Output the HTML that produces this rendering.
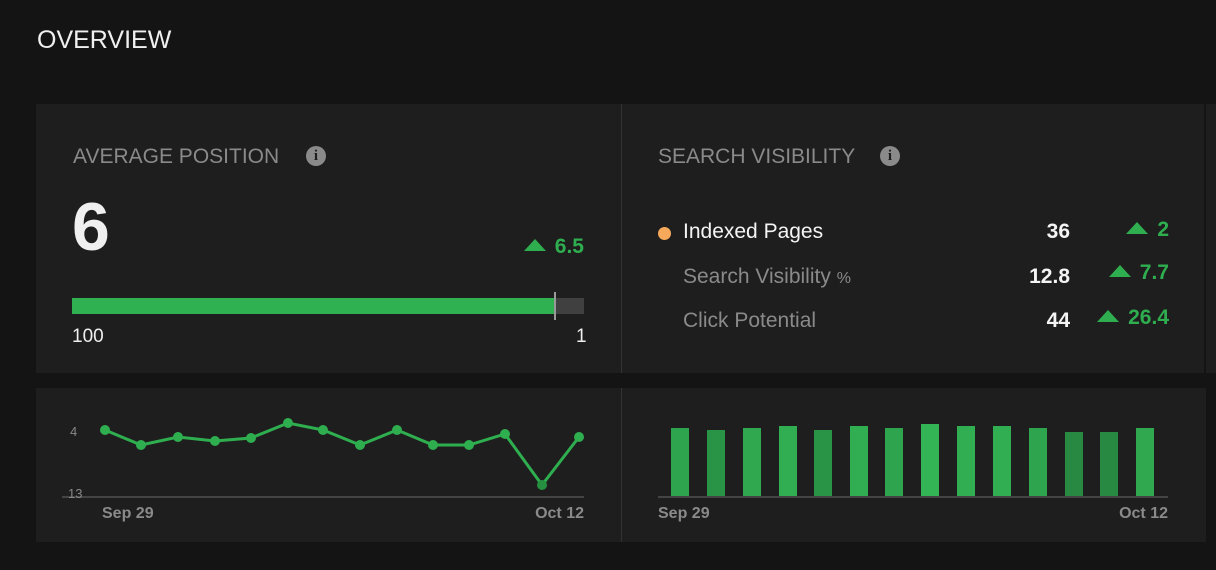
<!DOCTYPE html>
<html><head><style>
body{margin:0;width:1216px;height:570px;background:#141414;font-family:"Liberation Sans",sans-serif;position:relative;overflow:hidden}
.a{position:absolute}
.h{color:#8a8a8a;font-size:21px}
.g{color:#2fae50;font-weight:bold}
.t{display:inline-block;width:0;height:0;border-left:11px solid transparent;border-right:11px solid transparent;border-bottom:12px solid #2fae50;margin-right:9px;vertical-align:2px}
.info{width:20px;height:20px;border-radius:50%;background:#8a8a8a;color:#1e1e1e;font:bold 15px "Liberation Serif",serif;text-align:center;line-height:20px}
</style></head><body>
<div class="a" style="left:37px;top:26px;color:#f0f0f0;font-size:25px">OVERVIEW</div>
<div class="a" style="left:36px;top:104px;width:1180px;height:269px;background:#1e1e1e"></div>
<div class="a" style="left:621px;top:104px;width:1px;height:269px;background:#333"></div>
<div class="a" style="left:1204px;top:104px;width:2px;height:269px;background:#141414"></div>
<div class="a h" style="left:73px;top:145px">AVERAGE POSITION</div>
<div class="a info" style="left:306px;top:146px">i</div>
<div class="a" style="left:72px;top:188px;color:#f0f0f0;font-size:68px;font-weight:bold">6</div>
<div class="a g" style="left:464px;top:235px;width:120px;text-align:right;font-size:21px"><span class="t"></span>6.5</div>
<div class="a" style="left:72px;top:298px;width:512px;height:16px;background:#404040"></div>
<div class="a" style="left:72px;top:298px;width:483px;height:16px;background:#2fb152"></div>
<div class="a" style="left:554px;top:292px;width:2px;height:28px;background:#999"></div>
<div class="a" style="left:72px;top:326px;color:#eee;font-size:19px">100</div>
<div class="a" style="left:576px;top:326px;color:#eee;font-size:19px">1</div>
<div class="a h" style="left:658px;top:145px">SEARCH VISIBILITY</div>
<div class="a info" style="left:880px;top:146px">i</div>
<div class="a" style="left:658px;top:227px;width:13px;height:13px;border-radius:50%;background:#f6a95a"></div>
<div class="a" style="left:683px;top:220px;color:#f4f4f4;font-size:21px">Indexed Pages</div>
<div class="a" style="left:683px;top:265px;color:#8a8a8a;font-size:21px">Search Visibility <span style="font-size:16px">%</span></div>
<div class="a" style="left:683px;top:309px;color:#8a8a8a;font-size:21px">Click Potential</div>
<div class="a" style="left:990px;top:220px;width:80px;text-align:right;color:#f4f4f4;font-size:21px;font-weight:bold">36</div>
<div class="a" style="left:990px;top:265px;width:80px;text-align:right;color:#f4f4f4;font-size:21px;font-weight:bold">12.8</div>
<div class="a" style="left:990px;top:309px;width:80px;text-align:right;color:#f4f4f4;font-size:21px;font-weight:bold">44</div>
<div class="a g" style="left:1060px;top:218px;width:109px;text-align:right;font-size:21px"><span class="t"></span>2</div>
<div class="a g" style="left:1060px;top:261px;width:109px;text-align:right;font-size:21px"><span class="t"></span>7.7</div>
<div class="a g" style="left:1060px;top:306px;width:109px;text-align:right;font-size:21px"><span class="t"></span>26.4</div>
<div class="a" style="left:36px;top:388px;width:1170px;height:154px;background:#1e1e1e"></div>
<div class="a" style="left:621px;top:388px;width:1px;height:154px;background:#333"></div>
<svg class="a" style="left:0;top:0" width="1216" height="570">
<line x1="62" y1="497" x2="584" y2="497" stroke="#444" stroke-width="2"/>
<line x1="658" y1="497" x2="1168" y2="497" stroke="#444" stroke-width="2"/>
<text x="70" y="436" fill="#888" font-size="13" font-family="Liberation Sans">4</text>
<text x="68" y="498" fill="#888" font-size="13" font-family="Liberation Sans">13</text>
<g fill="#8a8a8a" font-size="16" font-weight="bold" font-family="Liberation Sans">
<text x="102" y="518">Sep 29</text><text x="584" y="518" text-anchor="end">Oct 12</text>
<text x="658" y="518">Sep 29</text><text x="1168" y="518" text-anchor="end">Oct 12</text></g>
<polyline fill="none" stroke="#2fae50" stroke-width="3" points="105,430 141,445 178,437 215,441 251,438 288,423 323,430 360,445 397,430 433,445 469,445 505,434 542,485 579,437"/>
<g fill="#2fae50"><circle cx="105" cy="430" r="5"/><circle cx="141" cy="445" r="5"/><circle cx="178" cy="437" r="5"/><circle cx="215" cy="441" r="5"/><circle cx="251" cy="438" r="5"/><circle cx="288" cy="423" r="5"/><circle cx="323" cy="430" r="5"/><circle cx="360" cy="445" r="5"/><circle cx="397" cy="430" r="5"/><circle cx="433" cy="445" r="5"/><circle cx="469" cy="445" r="5"/><circle cx="505" cy="434" r="5"/><circle cx="542" cy="485" r="5" fill="#269040"/><circle cx="579" cy="437" r="5"/></g>
<g>
<rect x="671" y="428" width="18" height="68" fill="#2ea44f"/>
<rect x="707" y="430" width="18" height="66" fill="#2a9446"/>
<rect x="743" y="428" width="18" height="68" fill="#2fa84f"/>
<rect x="779" y="426" width="18" height="70" fill="#31ae52"/>
<rect x="814" y="430" width="18" height="66" fill="#2a9446"/>
<rect x="850" y="426" width="18" height="70" fill="#31ae52"/>
<rect x="885" y="428" width="18" height="68" fill="#2ea44f"/>
<rect x="921" y="424" width="18" height="72" fill="#34b555"/>
<rect x="957" y="426" width="18" height="70" fill="#31ae52"/>
<rect x="993" y="426" width="18" height="70" fill="#31ae52"/>
<rect x="1029" y="428" width="18" height="68" fill="#2ea44f"/>
<rect x="1065" y="432" width="18" height="64" fill="#288a42"/>
<rect x="1100" y="432" width="18" height="64" fill="#288a42"/>
<rect x="1136" y="428" width="18" height="68" fill="#2fa84f"/>
</g>
</svg>
</body></html>
